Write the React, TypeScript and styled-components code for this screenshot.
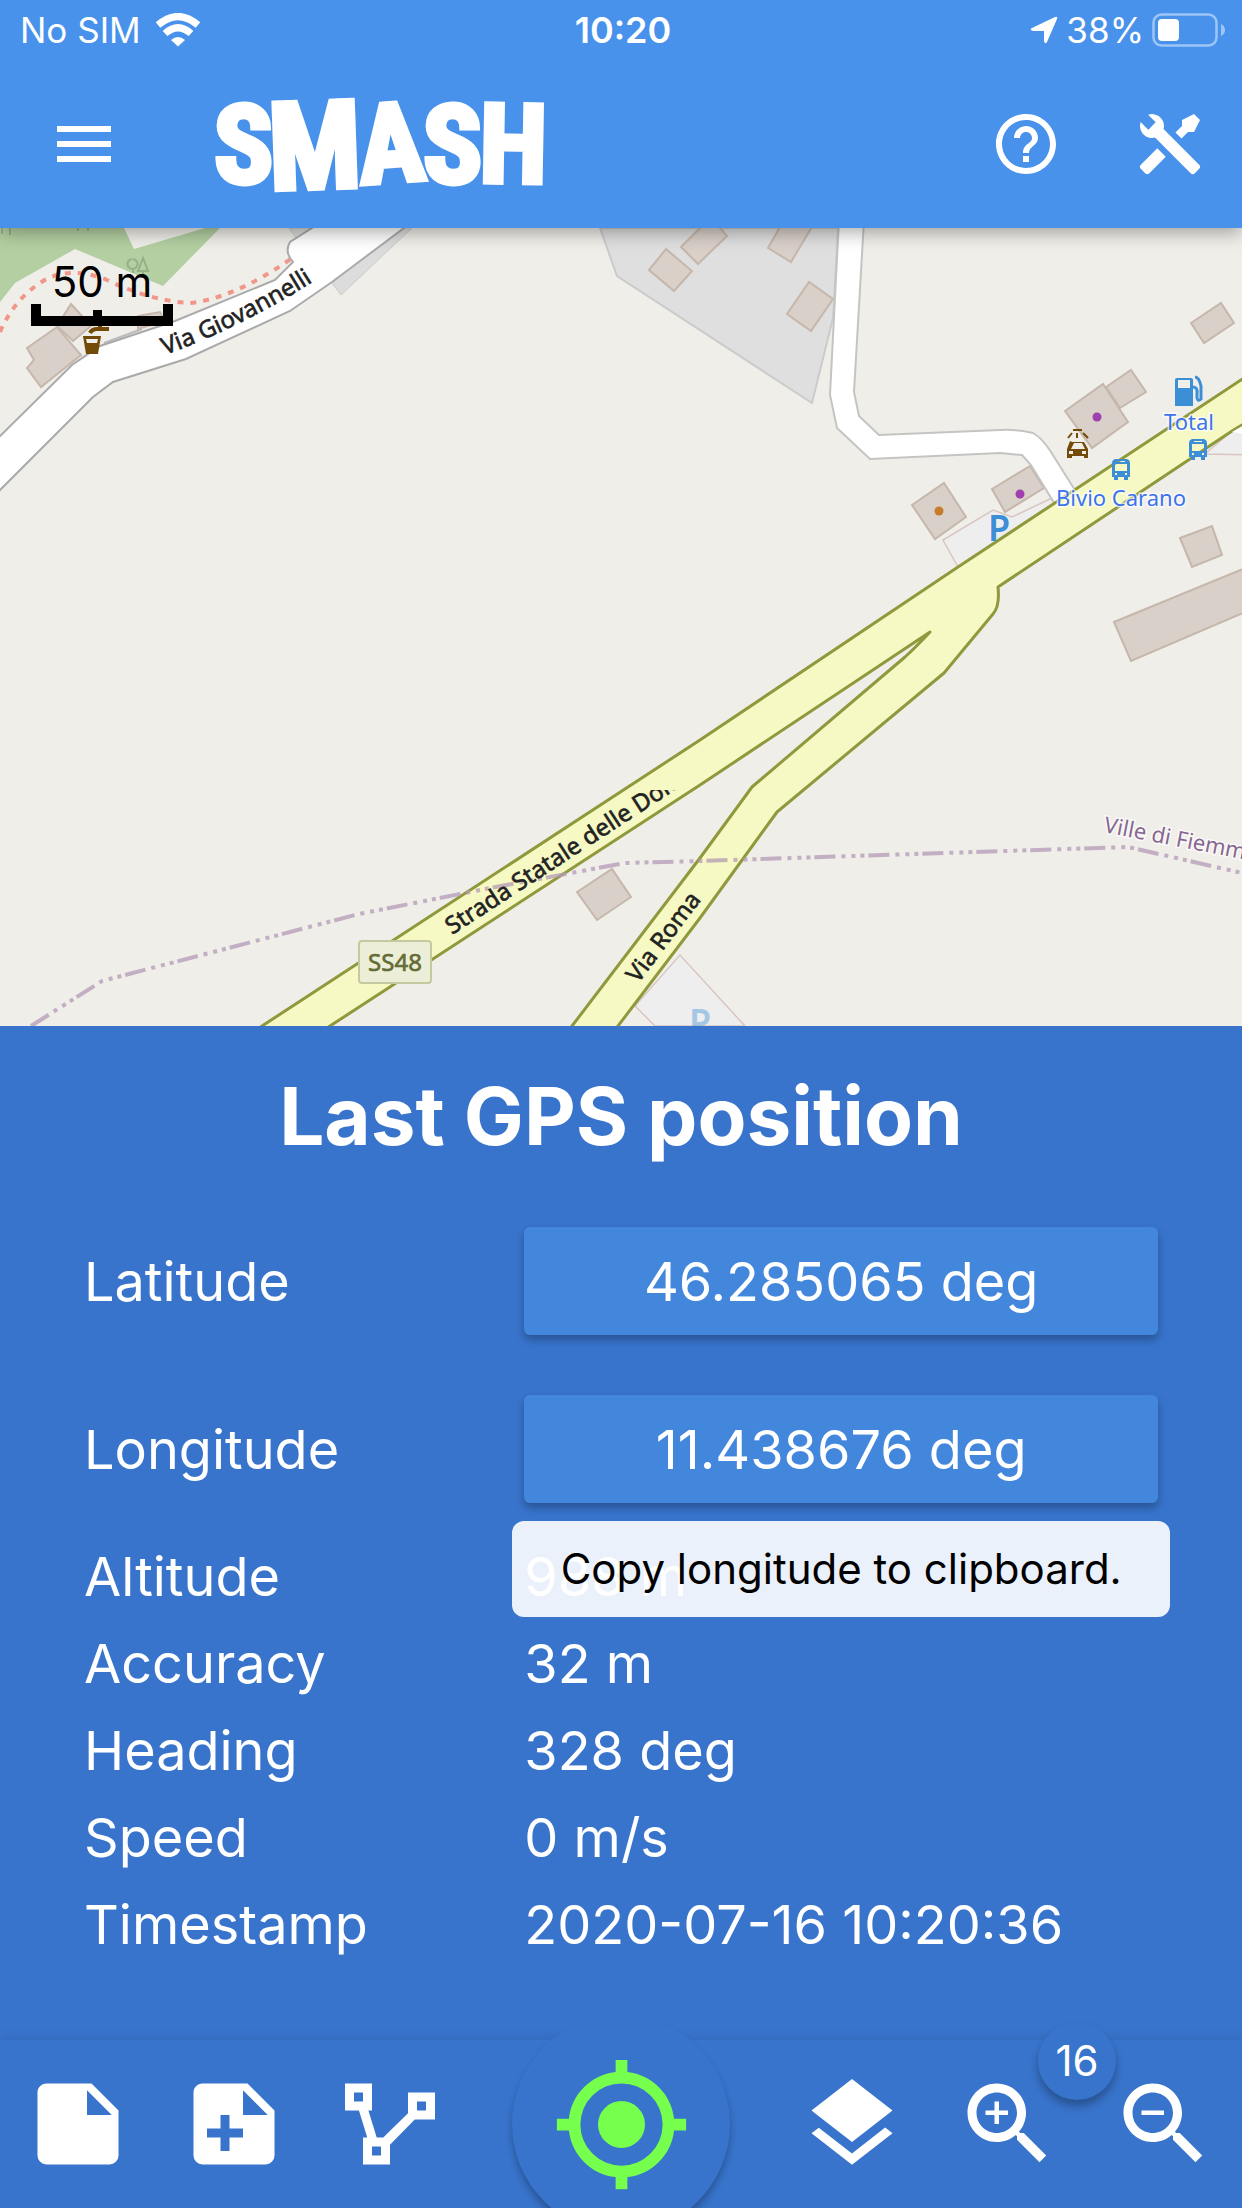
import React from "react";
import styled, { createGlobalStyle } from "styled-components";

const GlobalStyle = createGlobalStyle`
  *, *::before, *::after { box-sizing: border-box; }
  body { margin: 0; background: #3874cc; }
  button { border: 0; padding: 0; background: none; color: inherit; font: inherit; cursor: pointer; }
`;

const Screen = styled.div`
  display: flex;
  flex-direction: column;
  height: 100vh;
  overflow: hidden;
  color: #fff;
  font-family: Inter, Roboto, "Liberation Sans", sans-serif;
`;

const Header = styled.header`
  position: relative;
  z-index: 1;
  flex: none;
  background: #4892ec;
  box-shadow: 0 4px 18px rgba(0, 0, 0, 0.35);
`;

const StatusBar = styled.div`
  display: grid;
  grid-template-columns: 1fr auto 1fr;
  align-items: center;
  height: 60px;
  padding: 0 16px 0 20px;
  font-size: 35px;
  line-height: 60px;
`;

const StatusGroup = styled.div<{ $end?: boolean }>`
  display: flex;
  align-items: center;
  justify-content: ${(p) => (p.$end ? "flex-end" : "flex-start")};
  gap: ${(p) => (p.$end ? "8px" : "14px")};
`;

const Clock = styled.time`
  font-size: 36px;
  font-weight: 600;
`;

const Toolbar = styled.div`
  display: flex;
  align-items: center;
  height: 168px;
  padding: 0 36px 0 48px;
`;

const ToolbarButton = styled.button`
  display: flex;
  width: 72px;
  height: 72px;
`;

const Brand = styled.h1`
  display: flex;
  flex: 1;
  margin: 0 0 0 96px;
`;

const ToolbarActions = styled.div`
  display: flex;
  gap: 72px;
`;

const MapArea = styled.main`
  position: relative;
  display: flex;
  flex: 1;
  min-height: 0;
  background: #f0eee9;
`;

const MapDrawing = styled.svg`
  flex: 1;
  width: 100%;
  height: 100%;
  font-family: "Noto Sans", "Open Sans", sans-serif;
`;

const ScaleBar = styled.div`
  position: absolute;
  top: 32px;
  left: 31px;
  color: #000;
  font-size: 42px;
  line-height: 44px;
  text-align: center;
  svg { display: block; }
`;

const Panel = styled.section`
  flex: none;
  padding: 42px 84px 72px;
  background: #3874cc;
`;

const PanelTitle = styled.h2`
  margin: 0 0 33px;
  font-size: 80px;
  font-weight: 700;
  line-height: 96px;
  text-align: center;
`;

const Readings = styled.table`
  width: 100%;
  border-collapse: collapse;
  table-layout: fixed;
  font-size: 54px;
`;

const ReadingRow = styled.tr<{ $tall?: boolean }>`
  height: ${(p) => (p.$tall ? "168px" : "87px")};
`;

const ReadingLabel = styled.th`
  width: 41%;
  padding: 0;
  font-weight: 400;
  text-align: left;
`;

const ReadingValue = styled.td`
  padding: 0;
  white-space: nowrap;
`;

const CopyWrap = styled.div`
  position: relative;
`;

const CopyButton = styled.button`
  display: block;
  width: 100%;
  height: 108px;
  border-radius: 6px;
  background: #4387dd;
  box-shadow: 0 5px 8px rgba(0, 0, 0, 0.28);
`;

const Tooltip = styled.div`
  position: absolute;
  z-index: 1;
  top: calc(100% + 18px);
  left: -12px;
  right: -12px;
  border-radius: 12px;
  background: rgba(255, 255, 255, 0.9);
  color: #000;
  font-size: 42px;
  line-height: 96px;
  text-align: center;
`;

const BottomBar = styled.nav`
  position: relative;
  display: flex;
  flex: none;
  align-items: center;
  justify-content: space-between;
  height: 168px;
  padding: 0 24px;
  background: #3874cc;
  box-shadow: 0 0 12px rgba(0, 0, 0, 0.12);
`;

const BarGroup = styled.div`
  display: flex;
  gap: 48px;
`;

const BarButton = styled.button`
  position: relative;
  display: flex;
  width: 108px;
  height: 108px;
`;

const LocateButton = styled.button`
  display: flex;
  align-items: center;
  justify-content: center;
  flex: none;
  width: 218px;
  height: 218px;
  border-radius: 50%;
  background: #3874cc;
  color: #76ff4d;
  box-shadow: 0 6px 7px rgba(0, 0, 0, 0.26);
`;

const ZoomBadge = styled.output`
  position: absolute;
  top: -48px;
  left: 84px;
  width: 78px;
  border-radius: 50%;
  background: #3874cc;
  box-shadow: 0 6px 8px rgba(0, 0, 0, 0.3);
  font-size: 42px;
  line-height: 78px;
  text-align: center;
`;

type IconProps = { d: string; size: number };

function Icon({ d, size }: IconProps) {
  return (
    <svg width={size} height={size} viewBox="0 0 24 24" fill="currentColor" fillRule="evenodd" aria-hidden="true">
      <path d={d} />
    </svg>
  );
}

const magnifier =
  "M15.5 14h-.79l-.28-.27C15.41 12.59 16 11.11 16 9.5 16 5.91 13.09 3 9.5 3S3 5.91 3 9.5 5.91 16 9.5 16c1.61 0 3.09-.59 4.23-1.57l.27.28v.79l5 4.99L20.49 19l-4.99-5zm-6 0C7.01 14 5 11.99 5 9.5S7.01 5 9.5 5 14 7.01 14 9.5 11.99 14 9.5 14z";
const note = "M14 10V4.5L19.5 10M5 3C3.89 3 3 3.89 3 5V19A2 2 0 0 0 5 21H19A2 2 0 0 0 21 19V9L15 3H5Z";

const icons = {
  menu: "M3 18h18v-2H3v2zm0-5h18v-2H3v2zm0-7v2h18V6H3z",
  help: "M11 18h2v-2h-2v2zm1-16C6.48 2 2 6.48 2 12s4.48 10 10 10 10-4.48 10-10S17.52 2 12 2zm0 18c-4.41 0-8-3.59-8-8s3.59-8 8-8 8 3.59 8 8-3.59 8-8 8zm0-14c-2.21 0-4 1.79-4 4h2c0-1.1.9-2 2-2s2 .9 2 2c0 2-3 1.75-3 5h2c0-2.25 3-2.5 3-5 0-2.21-1.79-4-4-4z",
  tools:
    "M21.71 20.29L20.29 21.71A1 1 0 0 1 18.88 21.71L7 9.85A3.81 3.81 0 0 1 6 10A4 4 0 0 1 2.22 4.7L4.76 7.24L5.29 6.71L6.71 5.29L7.24 4.76L4.7 2.22A4 4 0 0 1 10 6A3.81 3.81 0 0 1 9.85 7L21.71 18.88A1 1 0 0 1 21.71 20.29M2.29 18.88A1 1 0 0 0 2.29 20.29L3.71 21.71A1 1 0 0 0 5.12 21.71L10.59 16.25L7.76 13.42M20 2L16 4V6L13.83 8.17L15.83 10.17L18 8H20L22 4Z",
  note,
  notePlus: note + "M9 10H11V13H14V15H11V18H9V15H6V13H9Z",
  polyline:
    "M2 3H8V9H7.2L9.05 15H10.5L16 9.6V5H22V11H17.5L12 16.6V21H6V15H6.95L5.1 9H2ZM4 5V7H6V5ZM18 7V9H20V7ZM8 17V19H10V17Z",
  locate:
    "M12 8A4 4 0 0 1 16 12A4 4 0 0 1 12 16A4 4 0 0 1 8 12A4 4 0 0 1 12 8M3.05 13H1V11H3.05C3.5 6.83 6.83 3.5 11 3.05V1H13V3.05C17.17 3.5 20.5 6.83 20.95 11H23V13H20.95C20.5 17.17 17.17 20.5 13 20.95V23H11V20.95C6.83 20.5 3.5 17.17 3.05 13M12 5A7 7 0 0 0 5 12A7 7 0 0 0 12 19A7 7 0 0 0 19 12A7 7 0 0 0 12 5Z",
  layers:
    "M11.99 18.54l-7.37-5.73L3 14.07l9 7 9-7-1.63-1.27-7.38 5.74zM12 16l7.36-5.73L21 9l-9-7-9 7 1.63 1.27L12 16z",
  zoomIn: magnifier + "M12 10h-2v2H9v-2H7V9h2V7h1v2h2v1z",
  zoomOut: magnifier + "M7 9h5v1H7z",
};

function WifiIcon() {
  return (
    <svg width="46" height="34" viewBox="0 0 46 34" aria-hidden="true">
      <g fill="none" stroke="#fff" strokeWidth="7">
        <path d="M3 12Q23 -5 43 12" />
        <path d="M10 20.500Q23 9 36 20.500" />
      </g>
      <path d="M16 27Q23 21 30 27L23 33.500Z" fill="#fff" />
    </svg>
  );
}

function BatteryIcon() {
  return (
    <svg width="74" height="34" viewBox="0 0 74 34" aria-label="Battery">
      <rect x="1.500" y="1.500" width="63" height="31" rx="8" fill="none" stroke="#9dc5f5" strokeWidth="2.500" />
      <rect x="6" y="6" width="21" height="22" rx="4" fill="#fff" />
      <path d="M69 11Q73 13 73 17T69 23Z" fill="#9dc5f5" />
    </svg>
  );
}

function Logo() {
  return (
    <svg width="336" height="108" viewBox="0 0 336 108" overflow="visible" role="img" aria-label="SMASH">
      <g
        fill="#fff"
        stroke="#fff"
        strokeWidth="5"
        fontFamily='"Liberation Sans Narrow", "Roboto Condensed", "Open Sans Condensed", "DejaVu Sans Condensed", sans-serif'
        fontWeight="700"
      >
        <text fontSize="110">
          <tspan x="-2" y="93">S</tspan>
          <tspan x="54" y="100" fontSize="122" rotate="-2">M</tspan>
          <tspan x="145" y="94" rotate="-4">A</tspan>
          <tspan x="207" y="93">S</tspan>
          <tspan x="263" y="92" rotate="1">H</tspan>
        </text>
      </g>
    </svg>
  );
}

function BusStop({ x, y }: { x: number; y: number }) {
  return (
    <g transform={`translate(${x} ${y})`}>
      <path
        fill="#3c8ed6"
        fillRule="evenodd"
        d="M3 0H15Q18 1 18 4V18H16V21H12V18H6V21H2V18H0V4Q0 1 3 0ZM3 5V12H15V5ZM5 2V3H13V2ZM3 14V16H5V14ZM13 14V16H15V14Z"
      />
    </g>
  );
}

const buildings = [
  "M27 348L57 327L81 355L41 387L27 368L34 360Z",
  "M57 326L71 304L91 326L73 341Z",
  "M138 316L160 312L165 321L138 329Z",
  "M649 270L666 249L692 271L674 291Z",
  "M681 247L700 228L715 222L727 236L698 264Z",
  "M768 248L784 220L816 220L791 262Z",
  "M787 314L809 282L833 299L811 331Z",
  "M1191 323L1221 303L1234 323L1204 343Z",
  "M1106 387L1131 370L1146 392L1120 408Z",
  "M1065 411L1103 384L1128 422L1092 448Z",
  "M912 505L944 483L966 517L935 539Z",
  "M992 489L1030 466L1044 488L1005 512Z",
  "M1180 538L1212 526L1222 555L1192 567Z",
  "M1114 622L1250 566L1250 610L1131 661Z",
  "M577 892L612 869L631 897L597 920Z",
];

function MapView() {
  return (
    <MapDrawing viewBox="0 228 1242 798" preserveAspectRatio="xMidYMid slice" role="img" aria-label="Map">
      <defs>
        <path id="giovannelli" d="M165 355Q243 327 322 276" />
        <clipPath id="labelTile">
          <path d="M400 790H676V1026H400Z" />
        </clipPath>
      </defs>

      <path d="M0 228H124L134 249L205 228H220L163 286L75 249L15 283L0 302Z" fill="#b4d0a2" />
      <g fill="none" stroke="#94b089" strokeWidth="2">
        <path d="M2 222V234M10 222V235M78 222V231M88 222V231M133 259A5 5 0 1 1 132 259M133 269V273M143 258L138 271H148ZM143 271V274" />
      </g>
      <path
        d="M0 332Q14 300 40 283Q66 265 105 279Q150 301 190 303Q235 298 292 258"
        fill="none"
        stroke="#f0968a"
        strokeWidth="4"
        strokeDasharray="6 7"
      />
      <path d="M600 228L617 276L812 403L833 318L838 228Z" fill="#dfdfdf" stroke="#cbcbcb" strokeWidth="2" />
      <path d="M289 228H316L296 238ZM332 283L341 295L412 228H396Z" fill="#dcdcdd" stroke="#cbcbcb" />
      <path d="M943 540L993 510L1012 517L1052 498L1056 505L958 567ZM635 1006L680 955L745 1026H655Z" fill="#eeeeee" stroke="#d9c6c4" strokeWidth="1.500" />
      <path d="M1205 454L1232 431L1250 424V455Z" fill="#eeeeee" stroke="#d9c6c4" strokeWidth="1.500" />

      {buildings.map((d) => (
        <path key={d} d={d} fill="#d9d0c9" stroke="#c6b7ac" strokeWidth="2" />
      ))}
      <path d="M104 343L142 329M106 347L136 336" stroke="#bbb" strokeWidth="2" />

      <path
        d="M-5 441L72 365L100 346L175 321L275 280L293 262Q284 252 290 242L312 228L330 215L420 215L404 228L332 282L290 311L186 359L113 382L93 397L-5 495Z"
        fill="#fff"
        stroke="#aaa"
        strokeWidth="2"
      />
      <path
        d="M839 220L830 395L837 428L870 459L1000 453L1022 455L1031 465L1056 506L1078 495L1051 452Q1042 438 1033 433Q1016 429 1000 430L879 435L859 416L854 392L864 220Z"
        fill="#fff"
        stroke="#c4c4c2"
        strokeWidth="2"
      />
      <path
        d="M1250 374L958 567L700 740L262 1026L200 1068L268 1068L330 1026L700 785L930 632Q915 648 905 657L752 787L700 858L572 1026L550 1056L596 1056L618 1026L700 918L777 812L944 673L993 614Q1000 606 998 587L1232 431L1250 420Z"
        fill="#f6f9c3"
        stroke="#8f993c"
        strokeWidth="3"
        strokeLinejoin="round"
      />
      <path d="M1232 432L1244 425V434Z" fill="#fff" />
      <path
        d="M31 1026L102 981L359 914L485 889L625 863L700 861L1128 847L1242 873"
        fill="none"
        stroke="#b39ab5"
        strokeOpacity="0.75"
        strokeWidth="4"
        strokeDasharray="21 6 4 6 4 5 4 4"
      />

      <g fontSize="24" fill="#222" stroke="#222" strokeWidth="0.600">
        <text>
          <textPath href="#giovannelli">Via Giovannelli</textPath>
        </text>
        <g clipPath="url(#labelTile)">
          <text transform="translate(452 935) rotate(-33)">Strada Statale delle Dolo</text>
        </g>
        <text transform="translate(638 984) rotate(-53)">Via Roma</text>
      </g>

      <rect x="359" y="941" width="72" height="42" rx="3" fill="#eceed8" stroke="#c5c9a0" strokeWidth="2" />
      <text x="395" y="971" textAnchor="middle" fontSize="24" fill="#646b35" stroke="#646b35" strokeWidth="0.600">SS48</text>

      <g fontSize="22" stroke="#fff" strokeWidth="3" strokeOpacity="0.700" paintOrder="stroke">
        <text fill="#876791" transform="translate(1103 832) rotate(11)">Ville di Fiemme</text>
        <text x="1189" y="430" textAnchor="middle" fill="#3c74ee">Total</text>
        <text x="1121" y="506" textAnchor="middle" fill="#3c74ee">Bivio Carano</text>
      </g>
      <g fill="#3c8ed6" fontSize="36" fontWeight="600">
        <text x="988" y="541">P</text>
        <text x="689" y="1035" opacity="0.400">P</text>
      </g>

      <circle cx="1097" cy="417" r="4.500" fill="#a03fae" />
      <circle cx="1020" cy="494" r="4.500" fill="#a03fae" />
      <circle cx="939" cy="511" r="4.500" fill="#c77c2c" />
      <BusStop x={1112} y={459} />
      <BusStop x={1189} y={439} />

      <path d="M1175 380Q1175 378 1177 378H1191Q1193 378 1193 380V406H1175ZM1178 380V388H1190V380Z" fill="#3c8ed6" fillRule="evenodd" />
      <path d="M1193 387Q1198 387 1197 394V398Q1198 402 1201 399V386Q1199 377 1195 377" fill="none" stroke="#3c8ed6" strokeWidth="3" />
      <path
        d="M1070 441L1072 442H1084L1088 449V458H1084V456H1072V458H1067V449ZM1074 443L1071 449H1085L1082 443ZM1069 451V454H1073V451ZM1082 451V454H1086V451Z"
        fill="#734a08"
        fillRule="evenodd"
      />
      <path d="M1073 430H1082M1072 433L1068 438M1077 433V438M1083 433L1088 438" stroke="#734a08" strokeWidth="2" />
      <path d="M83 336H101L98 354H86ZM86 339L87 343H97L98 339Z" fill="#734a08" fillRule="evenodd" />
      <path d="M90 333Q92 329 97 329H109M100 324V329" fill="none" stroke="#734a08" strokeWidth="4" />
    </MapDrawing>
  );
}

const readings = [
  { label: "Latitude", value: "46.285065 deg", copy: true },
  { label: "Longitude", value: "11.438676 deg", copy: true, tip: "Copy longitude to clipboard." },
  { label: "Altitude", value: "988 m" },
  { label: "Accuracy", value: "32 m" },
  { label: "Heading", value: "328 deg" },
  { label: "Speed", value: "0 m/s" },
  { label: "Timestamp", value: "2020-07-16 10:20:36" },
];

export default function App() {
  return (
    <Screen>
      <GlobalStyle />
      <Header>
        <StatusBar>
          <StatusGroup>
            <span>No SIM</span>
            <WifiIcon />
          </StatusGroup>
          <Clock>10:20</Clock>
          <StatusGroup $end>
            <svg width="28" height="28" viewBox="0 0 28 28" aria-hidden="true">
              <path d="M2 12L25 1Q28 0 27 3L17 26Q15 29 14 25V15H3Q-1 14 2 12Z" fill="#fff" />
            </svg>
            <span>38%</span>
            <BatteryIcon />
          </StatusGroup>
        </StatusBar>
        <Toolbar>
          <ToolbarButton aria-label="Menu">
            <Icon d={icons.menu} size={72} />
          </ToolbarButton>
          <Brand>
            <Logo />
          </Brand>
          <ToolbarActions>
            <ToolbarButton aria-label="Help">
              <Icon d={icons.help} size={72} />
            </ToolbarButton>
            <ToolbarButton aria-label="Tools">
              <Icon d={icons.tools} size={72} />
            </ToolbarButton>
          </ToolbarActions>
        </Toolbar>
      </Header>

      <MapArea>
        <MapView />
        <ScaleBar>
          50 m
          <svg width="142" height="22" viewBox="0 0 142 22" aria-hidden="true">
            <path d="M0 0H10V12H62V6H71V12H132V0H142V22H0Z" />
          </svg>
        </ScaleBar>
      </MapArea>

      <Panel>
        <PanelTitle>Last GPS position</PanelTitle>
        <Readings>
          <tbody>
            {readings.map((r) => (
              <ReadingRow key={r.label} $tall={r.copy}>
                <ReadingLabel scope="row">{r.label}</ReadingLabel>
                <ReadingValue>
                  {r.copy ? (
                    <CopyWrap>
                      <CopyButton>{r.value}</CopyButton>
                      {r.tip && <Tooltip role="tooltip">{r.tip}</Tooltip>}
                    </CopyWrap>
                  ) : (
                    r.value
                  )}
                </ReadingValue>
              </ReadingRow>
            ))}
          </tbody>
        </Readings>
      </Panel>

      <BottomBar>
        <BarGroup>
          <BarButton aria-label="Notes">
            <Icon d={icons.note} size={108} />
          </BarButton>
          <BarButton aria-label="Add note">
            <Icon d={icons.notePlus} size={108} />
          </BarButton>
          <BarButton aria-label="Logs">
            <Icon d={icons.polyline} size={108} />
          </BarButton>
        </BarGroup>
        <LocateButton aria-label="Center on position">
          <Icon d={icons.locate} size={141} />
        </LocateButton>
        <BarGroup>
          <BarButton aria-label="Layers">
            <Icon d={icons.layers} size={108} />
          </BarButton>
          <BarButton aria-label="Zoom in">
            <Icon d={icons.zoomIn} size={108} />
            <ZoomBadge>16</ZoomBadge>
          </BarButton>
          <BarButton aria-label="Zoom out">
            <Icon d={icons.zoomOut} size={108} />
          </BarButton>
        </BarGroup>
      </BottomBar>
    </Screen>
  );
}
